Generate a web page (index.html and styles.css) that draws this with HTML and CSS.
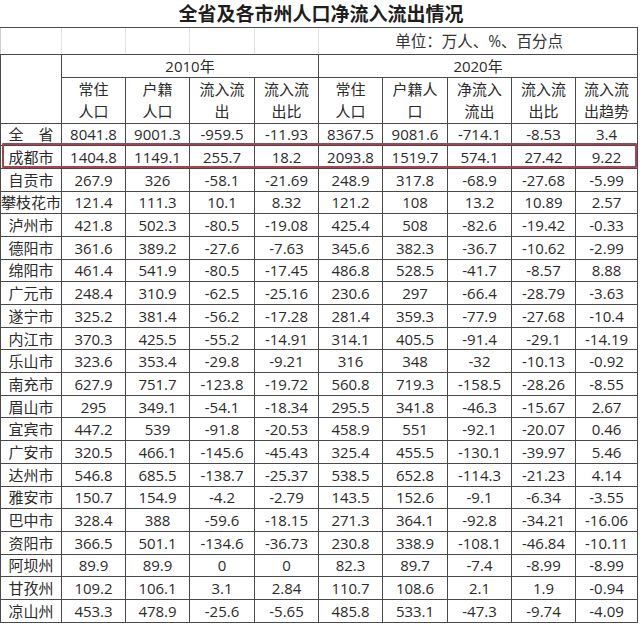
FILE: index.html
```html
<!DOCTYPE html>
<html lang="zh">
<head>
<meta charset="utf-8">
<link rel="stylesheet" href="styles.css">
</head>
<body>
<div class="sheet">
<table class="grid">
<colgroup>
<col class="c0"><col class="c1"><col class="c2"><col class="c3"><col class="c4"><col class="c5"><col class="c6"><col class="c7"><col class="c8"><col class="c9">
</colgroup>
<tbody>
<tr class="title-row"><td colspan="10" class="title">全省及各市州人口净流入流出情况</td></tr>
<tr class="unit-row"><td class="faint"></td><td class="faint"></td><td class="faint"></td><td class="faint"></td><td class="faint"></td><td colspan="5" class="unit">单位：万人、%、百分点</td></tr>
<tr class="year-row"><td rowspan="2" class="corner"></td><td colspan="4">2010年</td><td colspan="5">2020年</td></tr>
<tr class="head-row">
<td>常住<br>人口</td><td>户籍<br>人口</td><td>流入流<br>出</td><td>流入流<br>出比</td>
<td>常住<br>人口</td><td>户籍人<br>口</td><td>净流入<br>流出</td><td>流入流<br>出比</td><td>流入流<br>出趋势</td>
</tr>
<tr><td>全　省</td><td>8041.8</td><td>9001.3</td><td>-959.5</td><td>-11.93</td><td>8367.5</td><td>9081.6</td><td>-714.1</td><td>-8.53</td><td>3.4</td></tr>
<tr><td>成都市</td><td>1404.8</td><td>1149.1</td><td>255.7</td><td>18.2</td><td>2093.8</td><td>1519.7</td><td>574.1</td><td>27.42</td><td>9.22</td></tr>
<tr><td>自贡市</td><td>267.9</td><td>326</td><td>-58.1</td><td>-21.69</td><td>248.9</td><td>317.8</td><td>-68.9</td><td>-27.68</td><td>-5.99</td></tr>
<tr><td>攀枝花市</td><td>121.4</td><td>111.3</td><td>10.1</td><td>8.32</td><td>121.2</td><td>108</td><td>13.2</td><td>10.89</td><td>2.57</td></tr>
<tr><td>泸州市</td><td>421.8</td><td>502.3</td><td>-80.5</td><td>-19.08</td><td>425.4</td><td>508</td><td>-82.6</td><td>-19.42</td><td>-0.33</td></tr>
<tr><td>德阳市</td><td>361.6</td><td>389.2</td><td>-27.6</td><td>-7.63</td><td>345.6</td><td>382.3</td><td>-36.7</td><td>-10.62</td><td>-2.99</td></tr>
<tr><td>绵阳市</td><td>461.4</td><td>541.9</td><td>-80.5</td><td>-17.45</td><td>486.8</td><td>528.5</td><td>-41.7</td><td>-8.57</td><td>8.88</td></tr>
<tr><td>广元市</td><td>248.4</td><td>310.9</td><td>-62.5</td><td>-25.16</td><td>230.6</td><td>297</td><td>-66.4</td><td>-28.79</td><td>-3.63</td></tr>
<tr><td>遂宁市</td><td>325.2</td><td>381.4</td><td>-56.2</td><td>-17.28</td><td>281.4</td><td>359.3</td><td>-77.9</td><td>-27.68</td><td>-10.4</td></tr>
<tr><td>内江市</td><td>370.3</td><td>425.5</td><td>-55.2</td><td>-14.91</td><td>314.1</td><td>405.5</td><td>-91.4</td><td>-29.1</td><td>-14.19</td></tr>
<tr><td>乐山市</td><td>323.6</td><td>353.4</td><td>-29.8</td><td>-9.21</td><td>316</td><td>348</td><td>-32</td><td>-10.13</td><td>-0.92</td></tr>
<tr><td>南充市</td><td>627.9</td><td>751.7</td><td>-123.8</td><td>-19.72</td><td>560.8</td><td>719.3</td><td>-158.5</td><td>-28.26</td><td>-8.55</td></tr>
<tr><td>眉山市</td><td>295</td><td>349.1</td><td>-54.1</td><td>-18.34</td><td>295.5</td><td>341.8</td><td>-46.3</td><td>-15.67</td><td>2.67</td></tr>
<tr><td>宜宾市</td><td>447.2</td><td>539</td><td>-91.8</td><td>-20.53</td><td>458.9</td><td>551</td><td>-92.1</td><td>-20.07</td><td>0.46</td></tr>
<tr><td>广安市</td><td>320.5</td><td>466.1</td><td>-145.6</td><td>-45.43</td><td>325.4</td><td>455.5</td><td>-130.1</td><td>-39.97</td><td>5.46</td></tr>
<tr><td>达州市</td><td>546.8</td><td>685.5</td><td>-138.7</td><td>-25.37</td><td>538.5</td><td>652.8</td><td>-114.3</td><td>-21.23</td><td>4.14</td></tr>
<tr><td>雅安市</td><td>150.7</td><td>154.9</td><td>-4.2</td><td>-2.79</td><td>143.5</td><td>152.6</td><td>-9.1</td><td>-6.34</td><td>-3.55</td></tr>
<tr><td>巴中市</td><td>328.4</td><td>388</td><td>-59.6</td><td>-18.15</td><td>271.3</td><td>364.1</td><td>-92.8</td><td>-34.21</td><td>-16.06</td></tr>
<tr><td>资阳市</td><td>366.5</td><td>501.1</td><td>-134.6</td><td>-36.73</td><td>230.8</td><td>338.9</td><td>-108.1</td><td>-46.84</td><td>-10.11</td></tr>
<tr><td>阿坝州</td><td>89.9</td><td>89.9</td><td>0</td><td>0</td><td>82.3</td><td>89.7</td><td>-7.4</td><td>-8.99</td><td>-8.99</td></tr>
<tr><td>甘孜州</td><td>109.2</td><td>106.1</td><td>3.1</td><td>2.84</td><td>110.7</td><td>108.6</td><td>2.1</td><td>1.9</td><td>-0.94</td></tr>
<tr><td>凉山州</td><td>453.3</td><td>478.9</td><td>-25.6</td><td>-5.65</td><td>485.8</td><td>533.1</td><td>-47.3</td><td>-9.74</td><td>-4.09</td></tr>
</tbody>
</table>
<div class="highlight"></div>
</div>
</body>
</html>
```
FILE: styles.css
```css
html, body {
  margin: 0;
  padding: 0;
  background: #ffffff;
}
body {
  font-family: "Open Sans", "Noto Sans CJK SC", sans-serif;
  font-size: 15px;
  color: #2b2b2b;
}
.sheet {
  position: relative;
  width: 640px;
}
.grid {
  border-collapse: collapse;
  table-layout: fixed;
  width: 637px;
}
.c0 { width: 61px; }
.c1 { width: 64px; }
.c2 { width: 64px; }
.c3 { width: 65px; }
.c4 { width: 64px; }
.c5 { width: 64px; }
.c6 { width: 65px; }
.c7 { width: 64px; }
.c8 { width: 64px; }
.c9 { width: 62px; }
.grid td {
  border: 1px solid #4a4a4a;
  padding: 0;
  text-align: center;
  vertical-align: middle;
  line-height: 20px;
  white-space: nowrap;
  overflow: hidden;
}
.grid tr { height: 22.7px; }
.grid tr.title-row { height: 27px; }
.grid td.title {
  border-top: none;
  border-left: none;
  border-right: none;
  font-family: "Noto Sans CJK SC", sans-serif;
  font-weight: 700;
  font-size: 19px;
  line-height: 26px;
  color: #1e1e1e;
  padding-left: 4px;
}
.grid tr.unit-row { height: 27px; }
.grid td.faint {
  border-left: 1px solid #e2e2e2;
  border-right: 1px solid #e2e2e2;
}
.grid td.faint:first-child { border-left: 1px solid #cfcfcf; }
.grid td.unit {
  font-size: 15.5px;
  color: #333;
  border-left: none;
  padding-left: 2px;
}
.grid tr.year-row { height: 23px; }
.grid tr.head-row { height: 46px; }
.grid tr.head-row td { line-height: 22px; }
.highlight {
  position: absolute;
  left: 2px;
  top: 143px;
  width: 635px;
  height: 25px;
  box-sizing: border-box;
  border: 2px solid #a9414f;
  border-radius: 1px;
}
```
